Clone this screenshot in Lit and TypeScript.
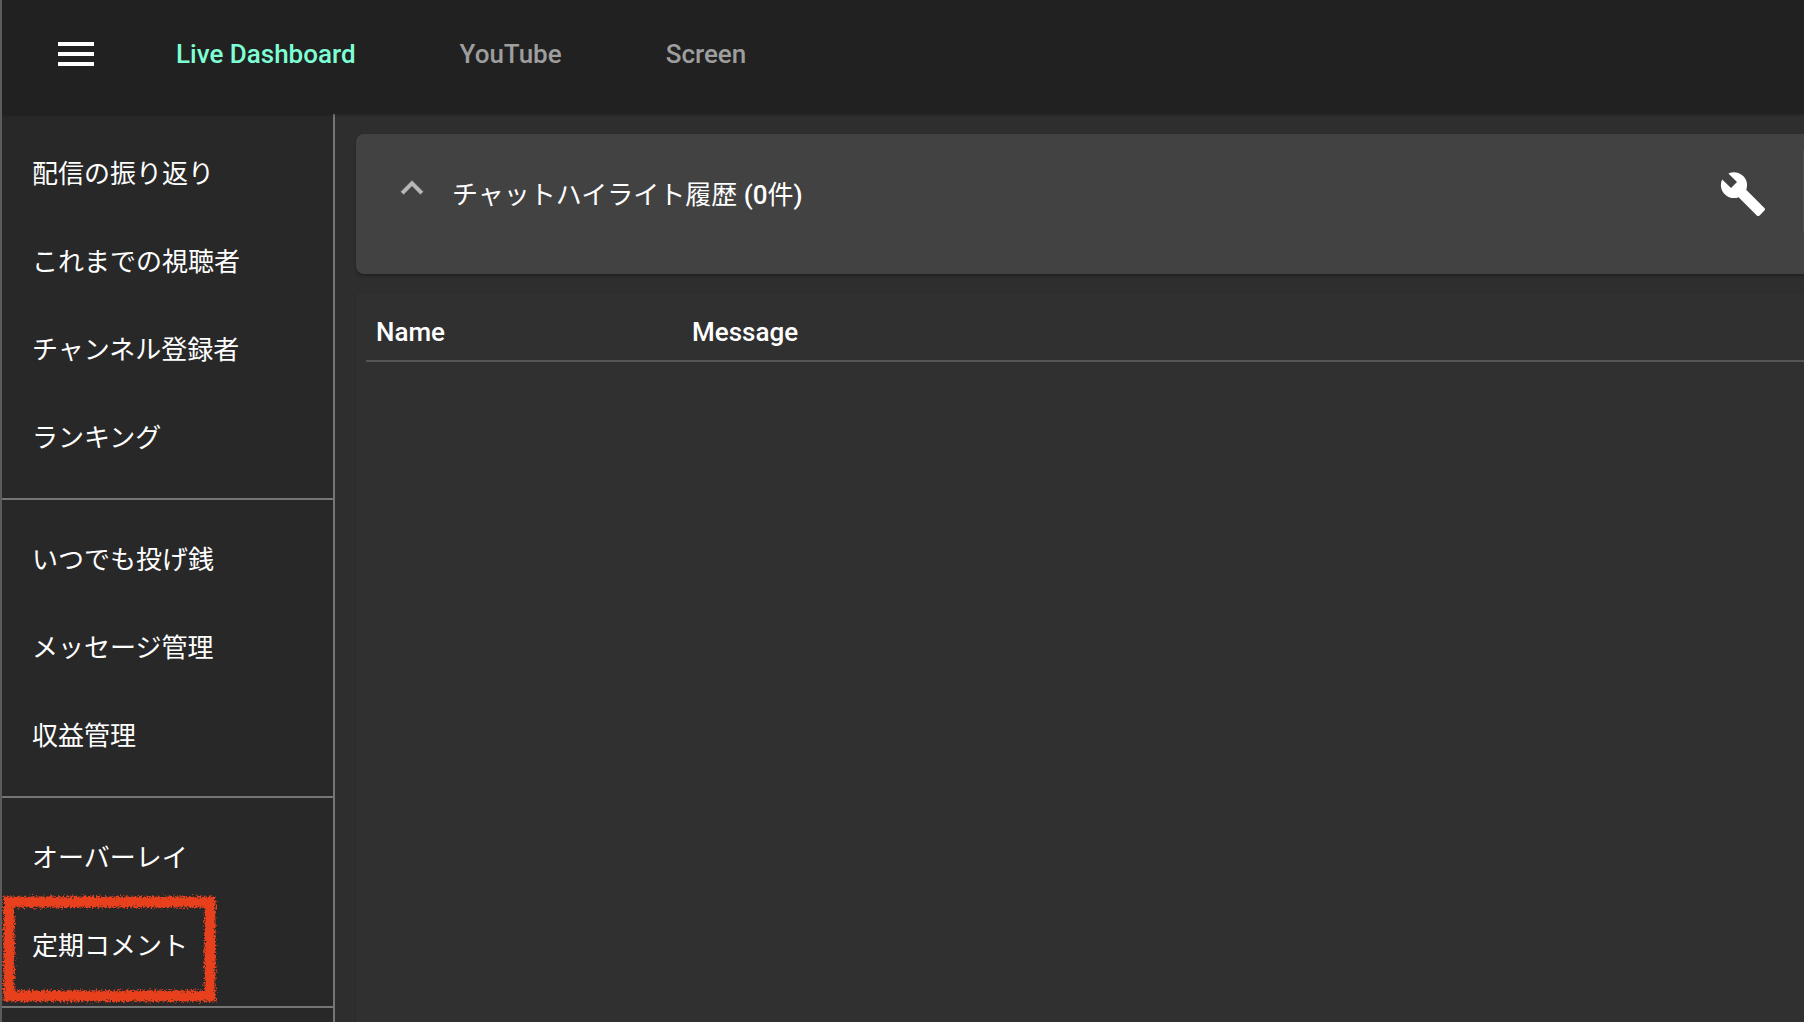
import { LitElement, html, css, svg } from "lit";
import { customElement } from "lit/decorators.js";

const sections = [
  ["配信の振り返り", "これまでの視聴者", "チャンネル登録者", "ランキング"],
  ["いつでも投げ銭", "メッセージ管理", "収益管理"],
  ["オーバーレイ", "定期コメント"],
];

const icon = (d: string, cls: string) => html`
  <svg class=${cls} viewBox="0 0 24 24" fill="currentColor">${svg`<path d=${d}></path>`}</svg>
`;

const MENU = "M3 18h18v-2H3v2zm0-5h18v-2H3v2zm0-7v2h18V6H3z";
const EXPAND_LESS = "M12 8l-6 6 1.41 1.41L12 10.83l4.59 4.58L18 14z";
const BUILD =
  "M22.7 19l-9.1-9.1c.9-2.3.4-5-1.5-6.9-2-2-5-2.4-7.4-1.3L9 6 6 9 1.6 4.7C.4 7.1.9 10.1 2.9 12.1c1.9 1.9 4.6 2.4 6.9 1.5l9.1 9.1c.4.4 1 .4 1.4 0l2.3-2.3c.5-.4.5-1.1.1-1.4z";

@customElement("app-root")
export class AppRoot extends LitElement {
  static styles = css`
    :host {
      display: flex;
      flex-direction: column;
      height: 100vh;
      overflow: hidden;
      background: #2e2e2e;
      border-left: 2px solid #5c5c5c;
      box-sizing: border-box;
      font-family: Roboto, "Noto Sans CJK JP", sans-serif;
      color: #fff;
    }
    .topbar {
      flex: 0 0 114px;
      display: flex;
      align-items: center;
      padding: 0 0 6px 50px;
      box-sizing: border-box;
      background: #212121;
      position: relative;
      z-index: 2;
      box-shadow: 0 1px 3px rgba(0, 0, 0, 0.25);
    }
    .menu {
      width: 48px;
      height: 48px;
      margin-right: 76px;
    }
    .tabs {
      display: flex;
      gap: 104px;
    }
    .tab {
      font-size: 26px;
      font-weight: 500;
      color: #9e9e9e;
    }
    .tab.active {
      color: #7fffd4;
    }
    .body {
      flex: 1;
      display: flex;
      min-height: 0;
    }
    .side {
      position: relative;
      flex: 0 0 333px;
      box-sizing: border-box;
      background: #282828;
      border-right: 2px solid #757575;
    }
    .group {
      padding: 13px 0 19px;
      border-bottom: 2px solid #757575;
    }
    .item {
      height: 88px;
      display: flex;
      align-items: center;
      padding-left: 30px;
      font-size: 26px;
      color: #fff;
    }
    .scribble {
      position: absolute;
      left: -4px;
      top: 780px;
      width: 220px;
      height: 112px;
      overflow: visible;
    }
    .main {
      flex: 1;
      min-width: 0;
      padding: 20px 0 0 21px;
      display: flex;
      flex-direction: column;
      gap: 19px;
    }
    .bar {
      position: relative;
      flex: 0 0 140px;
      display: flex;
      align-items: flex-start;
      padding: 32px 37px 0 34px;
      box-sizing: border-box;
      background: #424242;
      border-radius: 8px 0 0 8px;
      box-shadow: 0 2px 3px rgba(0, 0, 0, 0.3);
    }
    .chevron {
      width: 44px;
      height: 44px;
      color: #b8b8b8;
      margin-right: 18px;
      stroke: currentColor;
      stroke-width: 0.3;
    }
    .title {
      flex: 1;
      margin-top: 11px;
      font-size: 26px;
      line-height: 36px;
      font-weight: 500;
    }
    .title span {
      font-weight: 400;
    }
    .wrench {
      width: 48px;
      height: 48px;
      margin-top: 4px;
    }
    .edge {
      position: absolute;
      right: 0;
      top: 16px;
      width: 1px;
      height: 83px;
      background: #505050;
    }
    .paper {
      flex: 1;
      background: #303030;
      padding: 0 0 0 10px;
      box-shadow: -1px 0 2px rgba(0, 0, 0, 0.05);
    }
    .thead {
      display: flex;
      align-items: center;
      box-sizing: border-box;
      height: 69px;
      padding: 10px 0 0 10px;
      font-size: 26px;
      font-weight: 500;
      border-bottom: 2px solid #555;
    }
    .name {
      flex: 0 0 316px;
    }
  `;

  render() {
    return html`
      <header class="topbar">
        ${icon(MENU, "menu")}
        <nav class="tabs">
          <div class="tab active">Live Dashboard</div>
          <div class="tab">YouTube</div>
          <div class="tab">Screen</div>
        </nav>
      </header>
      <div class="body">
        <aside class="side">
          ${sections.map(
            (group) => html`
              <div class="group">
                ${group.map((label) => html`<div class="item">${label}</div>`)}
              </div>
            `,
          )}
          <svg class="scribble" viewBox="0 0 220 112">
            <defs>
              <filter id="rough" x="-10%" y="-15%" width="120%" height="130%">
                <feTurbulence type="fractalNoise" baseFrequency="0.55" numOctaves="3" seed="4"></feTurbulence>
                <feDisplacementMap in="SourceGraphic" scale="8"></feDisplacementMap>
              </filter>
            </defs>
            <rect x="11" y="8" width="201" height="94" fill="none" stroke="#e8401f" stroke-width="11" filter="url(#rough)"></rect>
          </svg>
        </aside>
        <main class="main">
          <section class="bar">
            ${icon(EXPAND_LESS, "chevron")}
            <div class="title"><span>チャットハイライト履歴</span> (0<span>件</span>)</div>
            ${icon(BUILD, "wrench")}
            <div class="edge"></div>
          </section>
          <section class="paper">
            <div class="thead">
              <div class="name">Name</div>
              <div>Message</div>
            </div>
          </section>
        </main>
      </div>
    `;
  }
}
